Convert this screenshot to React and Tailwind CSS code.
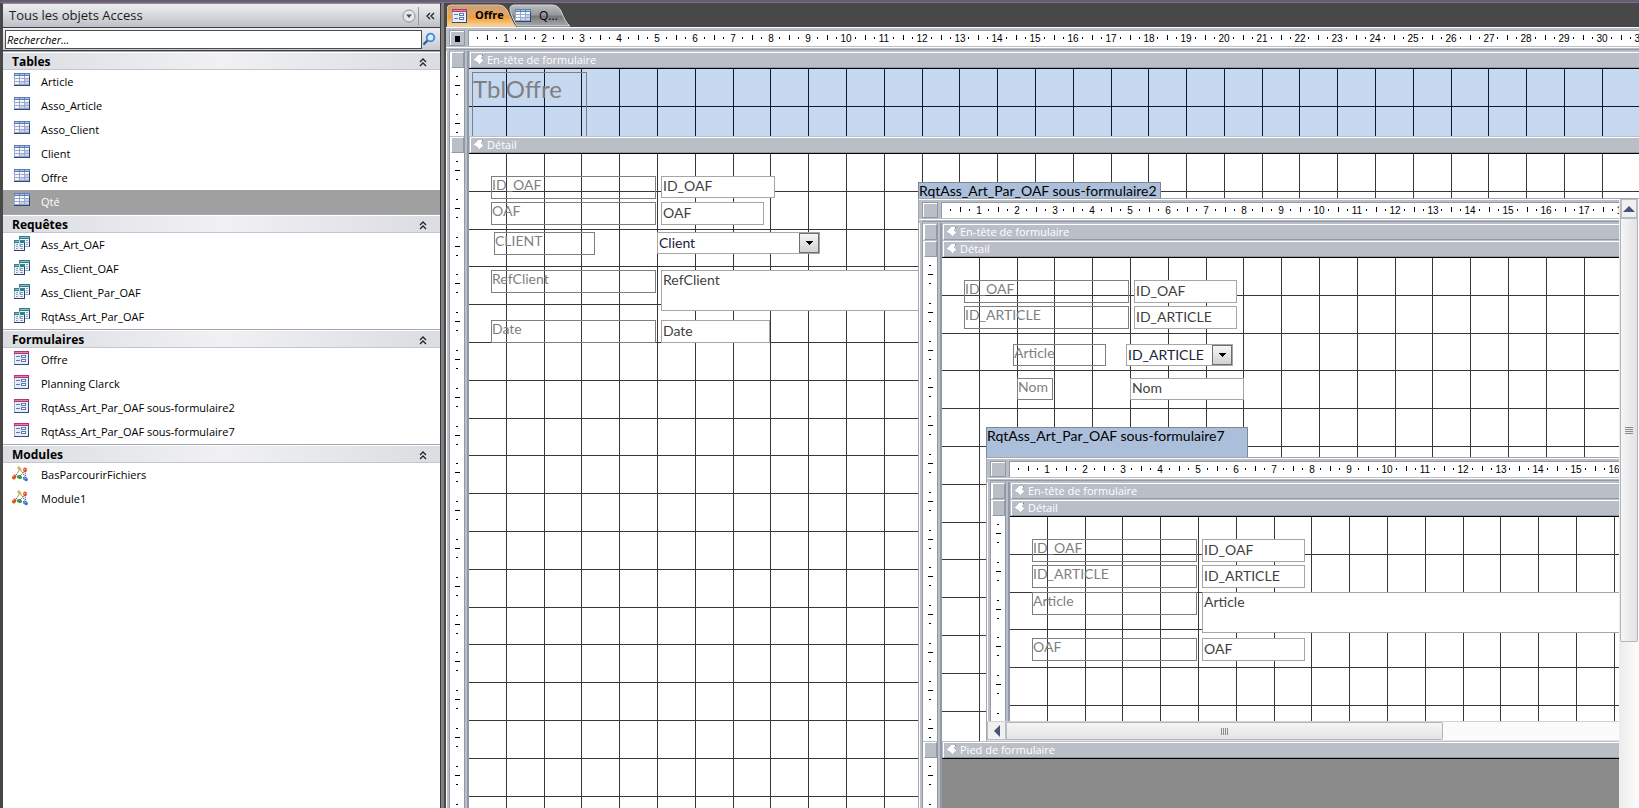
import React, { useState } from "react";

const CM = 96 / 2.54;
const range = (n) => Array.from({ length: n }, (_, i) => i);

const groups = [
  {
    title: "Tables",
    type: "table",
    items: ["Article", "Asso_Article", "Asso_Client", "Client", "Offre", "Qté"],
  },
  {
    title: "Requêtes",
    type: "query",
    items: ["Ass_Art_OAF", "Ass_Client_OAF", "Ass_Client_Par_OAF", "RqtAss_Art_Par_OAF"],
  },
  {
    title: "Formulaires",
    type: "form",
    items: [
      "Offre",
      "Planning Clarck",
      "RqtAss_Art_Par_OAF sous-formulaire2",
      "RqtAss_Art_Par_OAF sous-formulaire7",
    ],
  },
  { title: "Modules", type: "module", items: ["BasParcourirFichiers", "Module1"] },
];

/* ---------- Icons ---------- */

const TableIcon = () => (
  <svg width="16" height="13" viewBox="0 0 16 13" shapeRendering="crispEdges">
    <rect width="16" height="13" fill="#9aa9c6" />
    <rect width="16" height="3" fill="#5c7fb8" />
    <rect x="1" y="1" width="4" height="1" fill="#a9c0e6" />
    <rect x="6" y="1" width="4" height="1" fill="#a9c0e6" />
    <rect x="11" y="1" width="4" height="1" fill="#a9c0e6" />
    {[3, 6, 9].map((y, r) =>
      [1, 6, 11].map((x, c) => (
        <rect key={`${x}-${y}`} x={x} y={y} width="4" height="2" fill={r + c > 2 ? "#c3d2ee" : "#f6f9ff"} />
      ))
    )}
    <rect y="12" width="16" height="1" fill="#31466e" />
    <rect x="15" y="3" width="1" height="10" fill="#31466e" />
  </svg>
);

const QueryIcon = () => (
  <svg width="16" height="15" viewBox="0 0 16 15" shapeRendering="crispEdges">
    <rect x="5" width="11" height="11" fill="#8ea6c2" />
    <rect x="5" width="11" height="3" fill="#2f8088" />
    <rect x="6" y="1" width="9" height="1" fill="#7fbcc0" />
    <rect x="6" y="3" width="9" height="7" fill="#eef3fb" />
    <rect x="12" y="4" width="2" height="1" fill="#8ba0c4" />
    <rect x="12" y="6" width="2" height="1" fill="#8ba0c4" />
    <rect x="12" y="8" width="2" height="1" fill="#8ba0c4" />
    <rect x="15" y="3" width="1" height="8" fill="#2c4266" />
    <rect y="4" width="11" height="11" fill="#9db0ca" />
    <rect y="4" width="11" height="3" fill="#2f8088" />
    <rect x="1" y="5" width="4" height="1" fill="#7fbcc0" />
    <rect x="1" y="7" width="9" height="7" fill="#eef3fb" />
    <rect x="5" y="4" width="1" height="7" fill="#bfe0e2" />
    <rect x="2" y="8" width="2" height="1" fill="#8ba0c4" />
    <rect x="2" y="10" width="2" height="1" fill="#8ba0c4" />
    <rect x="2" y="12" width="2" height="1" fill="#8ba0c4" />
    <rect x="6" y="8" width="3" height="3" fill="#7f96bd" />
    <rect x="7" y="9" width="2" height="1" fill="#ffffff" />
    <rect x="6" y="12" width="3" height="1" fill="#8ba0c4" />
    <rect x="10" y="7" width="1" height="8" fill="#2c4266" />
    <rect y="14" width="11" height="1" fill="#2c4266" />
  </svg>
);

const FormIcon = () => (
  <svg width="15" height="14" viewBox="0 0 15 14" shapeRendering="crispEdges">
    <rect width="15" height="14" fill="#a3b1cf" />
    <rect width="15" height="3" fill="#b5356f" />
    <rect x="1" y="1" width="13" height="1" fill="#dd86a8" />
    <rect x="1" y="3" width="13" height="10" fill="#e6edfa" />
    <rect x="2" y="5" width="4" height="1" fill="#5f79ad" />
    <rect x="2" y="9" width="4" height="1" fill="#5f79ad" />
    <rect x="7" y="4" width="5" height="3" fill="#5f79ad" />
    <rect x="8" y="5" width="3" height="1" fill="#ffffff" />
    <rect x="7" y="8" width="5" height="3" fill="#5f79ad" />
    <rect x="8" y="9" width="3" height="1" fill="#ffffff" />
    <rect x="14" y="3" width="1" height="11" fill="#344b7c" />
    <rect y="13" width="15" height="1" fill="#344b7c" />
  </svg>
);

const ModuleIcon = () => (
  <svg width="17" height="16" viewBox="0 0 17 16">
    <path d="M8 3 L3 11 M8 3 L14 12 M13 5 L7 11 M13 5 L14 12 M3 11 L14 12" stroke="#444" strokeWidth="1" strokeDasharray="1 1" fill="none" />
    <ellipse cx="7.5" cy="2.8" rx="1.7" ry="2.7" fill="#cdbd58" transform="rotate(-30 7.5 2.8)" />
    <ellipse cx="13" cy="4" rx="1.9" ry="2.4" fill="#df4a22" />
    <circle cx="12.5" cy="3.5" r="0.8" fill="#f7b79a" />
    <ellipse cx="2.2" cy="11" rx="1.9" ry="2.6" fill="#df4a22" transform="rotate(25 2.2 11)" />
    <circle cx="1.7" cy="10" r="0.8" fill="#f7b79a" />
    <ellipse cx="7.5" cy="11" rx="2.5" ry="1.9" fill="#3b9a3e" transform="rotate(20 7.5 11)" />
    <ellipse cx="13.5" cy="13" rx="2.7" ry="1.8" fill="#3e74d8" transform="rotate(30 13.5 13)" />
    <circle cx="13" cy="12.3" r="0.8" fill="#a9c6fa" />
  </svg>
);

const icons = { table: TableIcon, query: QueryIcon, form: FormIcon, module: ModuleIcon };

const DoubleChevronUp = () => (
  <svg width="8" height="9" viewBox="0 0 8 9" fill="none" stroke="#222" strokeWidth="1.3">
    <path d="M1 4 L4 1 L7 4 M1 8 L4 5 L7 8" />
  </svg>
);

const SectionArrow = () => (
  <svg width="10" height="10" viewBox="0 0 10 10" shapeRendering="crispEdges">
    <path d="M4 0 H9 V1 H8 V2 H7 V4 H8 V5 H9 V6 H8 V7 H7 V8 H6 V9 H5 V8 H4 V7 H3 V6 H1 V5 H0 V4 H1 V3 H2 V2 H3 V1 H4 Z" fill="#fff" />
    <rect x="8" y="0" width="1" height="1" fill="#6f7682" />
  </svg>
);

/* ---------- Navigation pane ---------- */

const NavGroup = ({ title, type, items, selected, onSelect }) => {
  const [open, setOpen] = useState(true);
  const Icon = icons[type];

  return (
    <section>
      <button
        type="button"
        onClick={() => setOpen(!open)}
        className="flex h-[19px] w-full items-center justify-between border-t border-b border-t-[#a3a8b3] border-b-[#c3c7cd] bg-gradient-to-r from-[#dadde1] via-[#f1f1f3] to-[#dadde1] pt-[3px] pr-[13px] pl-[9px] text-[12px] leading-[14px] font-bold text-black shadow-[inset_0_1px_0_#fff]"
      >
        <span>{title}</span>
        <DoubleChevronUp />
      </button>
      {open && (
        <ul>
          {items.map((item) => {
            const active = selected === `${type}/${item}`;
            return (
              <li key={item}>
                <button
                  type="button"
                  onClick={() => onSelect(`${type}/${item}`)}
                  className={`flex h-6 w-full items-start text-left text-[11px] leading-[23px] ${
                    active ? "bg-[#a0a0a0] text-white" : "text-black"
                  }`}
                >
                  <span className={`w-[38px] shrink-0 pt-[3px] ${type === "module" ? "pl-[9px]" : "pl-[11px]"}`}>
                    <Icon />
                  </span>
                  <span>{item}</span>
                </button>
              </li>
            );
          })}
        </ul>
      )}
    </section>
  );
};

const NavigationPane = () => {
  const [selected, setSelected] = useState("table/Qté");
  const [search, setSearch] = useState("");

  return (
    <aside className="flex w-[438px] shrink-0 flex-col border-r border-[#3a3a3a] bg-white">
      <header className="flex h-[25px] items-center border-t border-b border-t-[#8a8a90] border-b-[#3a3d42] bg-gradient-to-b from-[#eeeff1] to-[#bdc1c7] pl-[6px]">
        <h1 className="flex-1 text-[13px] text-[#1c1c1c]">Tous les objets Access</h1>
        <button type="button" aria-label="Options">
          <svg width="14" height="14" viewBox="0 0 14 14">
            <circle cx="7" cy="7" r="6" fill="#e6e8eb" stroke="#8c9097" />
            <path d="M4 5.5 H10 L7 9 Z" fill="#4a4f60" />
          </svg>
        </button>
        <span className="mx-[2px] h-[18px] w-px bg-[#9198a5]" />
        <button type="button" aria-label="Réduire" className="flex w-[19px] justify-center">
          <svg width="9" height="8" viewBox="0 0 9 8" fill="none" stroke="#222" strokeWidth="1.3">
            <path d="M4 1 L1 4 L4 7 M8 1 L5 4 L8 7" />
          </svg>
        </button>
      </header>

      <div className="flex h-[23px] items-center border-b border-[#3a3d42] bg-gradient-to-b from-[#eeeff1] to-[#c6cad0] pr-1 pl-[2px]">
        <input
          type="text"
          aria-label="Rechercher"
          placeholder="Rechercher..."
          value={search}
          onChange={(e) => setSearch(e.target.value)}
          className="h-[19px] min-w-0 flex-1 border border-[#4b4b4b] bg-white px-px text-[11px] italic outline-none placeholder:text-black"
        />
        <button type="button" aria-label="Lancer la recherche">
          <svg width="14" height="14" viewBox="0 0 14 14" fill="none">
            <path d="M1.5 12.5 L5.5 8.5" stroke="#2a4c94" strokeWidth="2" />
            <circle cx="8.5" cy="5.5" r="3.8" fill="#d8ecfa" stroke="#3f86d0" strokeWidth="1.8" />
          </svg>
        </button>
      </div>

      <nav className="flex-1 overflow-hidden">
        {groups.map((group) => (
          <NavGroup key={group.title} {...group} selected={selected} onSelect={setSelected} />
        ))}
      </nav>
    </aside>
  );
};

/* ---------- Form designer ---------- */

const Grid = ({ color }) => (
  <svg className="absolute inset-0 h-full w-full" shapeRendering="crispEdges" fill={color}>
    {range(60).map((i) => (
      <rect key={`v${i}`} x={Math.round(CM * (i + 1)) - 1} y="0" width="1" height="100%" />
    ))}
    {range(30).map((i) => (
      <rect key={`h${i}`} x="0" y={Math.round(CM * (i + 1)) - 1} width="100%" height="1" />
    ))}
  </svg>
);

const HorizontalRuler = ({ length }) => (
  <svg className="h-full w-full" shapeRendering="crispEdges">
    {range(length).map((i) => {
      const x = Math.round(CM * i);
      return (
        <g key={i}>
          <rect x={x + 8} y="6" width="1" height="2" />
          <rect x={x + 18} y="4" width="1" height="5" />
          <rect x={x + 27} y="6" width="1" height="2" />
          <text x={x + 37} y="11" textAnchor="middle" fontFamily="Liberation Sans, sans-serif" fontSize="10">
            {i + 1}
          </text>
        </g>
      );
    })}
  </svg>
);

const VerticalRuler = () => (
  <svg className="absolute inset-0 h-full w-full" shapeRendering="crispEdges">
    {range(30).map((i) => {
      const y = Math.round(CM * i);
      return (
        <g key={i}>
          <rect x="6" y={y + 8} width="2" height="1" />
          <rect x="5" y={y + 17} width="5" height="1" />
          <rect x="6" y={y + 26} width="2" height="1" />
        </g>
      );
    })}
  </svg>
);

const Gutter = ({ children }) => (
  <div className="flex w-[23px] shrink-0 border-r-2 border-l border-r-[#9299a6] border-l-white bg-[#b9bec7] px-[2px]">
    <div className="relative w-4 overflow-hidden border-x border-[#9299a6] bg-white">{children}</div>
  </div>
);

const Section = ({ title, collapsed, className = "", gridColor = "#383838", children }) => (
  <>
    <div className="flex h-[17px] shrink-0">
      <Gutter>
        <div className="h-full border-t border-[#b9bec7] pl-[1px]">
          <div className="h-full border-t border-r border-b border-l border-t-white border-r-[#9299a6] border-b-[#9299a6] border-l-white bg-[#b9bec7]" />
        </div>
      </Gutter>
      <div className="flex min-w-0 flex-1 border-t border-[#b9bec7] bg-[#b9bec7] pl-px">
        <h2 className="flex flex-1 items-center gap-[3px] border-t border-b border-l border-t-white border-b-[#9299a6] border-l-white pl-[3px] text-[11px] leading-[14px] whitespace-nowrap text-white">
          <SectionArrow />
          {title}
        </h2>
      </div>
    </div>
    {!collapsed && (
      <div className={`flex ${className}`}>
        <Gutter>
          <VerticalRuler />
        </Gutter>
        <div className="relative min-w-0 flex-1 overflow-hidden border-t border-black">
          {gridColor && <Grid color={gridColor} />}
          {children}
        </div>
      </div>
    )}
  </>
);

const Designer = ({ selected, rulerLength, children }) => (
  <div className="flex min-h-0 min-w-0 flex-1 flex-col bg-white">
    <div className="flex h-6 shrink-0 flex-col border-t border-white bg-[#b9bec7] pt-[2px]">
      <div className="flex h-[16px]">
        <div className="ml-[3px] w-4 shrink-0 border border-[#9299a6]">
          <div className="flex h-full items-center justify-center border-t border-l border-white">
            {selected && <span className="h-[6px] w-[5px] bg-black" />}
          </div>
        </div>
        <div className="ml-[3px] min-w-0 flex-1 border-t border-l border-[#9299a6] bg-white">
          <HorizontalRuler length={rulerLength} />
        </div>
      </div>
      <div className="mt-px h-px bg-white" />
      <div className="mt-[1px] ml-[3px] h-px bg-[#9299a6]" />
    </div>
    {children}
  </div>
);

const controlBase = "absolute border font-[Lato,'Open_Sans',sans-serif] text-[14px]";

const FieldLabel = ({ className, htmlFor, children }) => (
  <label
    htmlFor={htmlFor}
    className={`${controlBase} overflow-hidden border-[#7f7f7f] leading-[15px] whitespace-nowrap text-[#7f7f7f] ${className}`}
  >
    {children}
  </label>
);

const TextBox = ({ className, id, value }) => (
  <input
    id={id}
    defaultValue={value}
    className={`${controlBase} border-[#a6a6a6] bg-white px-px pb-[3px] leading-[17px] text-[#3f3f3f] outline-none ${className}`}
  />
);

const MemoBox = ({ className, id, value }) => (
  <textarea
    id={id}
    defaultValue={value}
    className={`${controlBase} resize-none border-[#a6a6a6] bg-white px-px leading-[17px] text-[#3f3f3f] outline-none ${className}`}
  />
);

const ComboBox = ({ className, id, value }) => (
  <div className={`absolute h-[22px] ${className}`}>
    <select
      id={id}
      className="block h-full w-full appearance-none border border-[#a6a6a6] bg-white pb-[2px] pl-px font-[Lato,'Open_Sans',sans-serif] text-[14px] leading-[17px] text-[#17243a] outline-none"
    >
      <option>{value}</option>
    </select>
    <span className="pointer-events-none absolute top-[1px] right-[1px] flex h-5 w-5 items-center justify-center border border-[#6e6e6e] bg-gradient-to-b from-[#f6f6f6] to-[#d2d2d2]">
      <svg width="7" height="4" viewBox="0 0 7 4" shapeRendering="crispEdges">
        <path d="M0 0 H7 V1 H6 V2 H5 V3 H4 V4 H3 V3 H2 V2 H1 V1 H0 Z" />
      </svg>
    </span>
  </div>
);

const SubformTitle = ({ className, children }) => (
  <div
    className={`${controlBase} overflow-hidden border-b-0 border-[#7f8792] bg-[#abbfda] leading-[15px] whitespace-nowrap text-black ${className}`}
  >
    {children}
  </div>
);

const VerticalScrollbar = () => (
  <div className="flex w-5 shrink-0 flex-col bg-gradient-to-r from-[#ececec] to-[#fdfdfd] px-px">
    <button
      type="button"
      aria-label="Défiler vers le haut"
      className="flex h-5 w-full items-center justify-center border-2 border-t border-[#b7bcc6] bg-[#f0f0f0]"
    >
      <svg width="12" height="6" viewBox="0 0 12 6">
        <path d="M0 6 L6 0 L12 6 Z" fill="#465478" />
      </svg>
    </button>
    <div className="flex h-[423px] flex-col items-center justify-center gap-px rounded-b-xs border border-t-0 border-[#b0b5c0] bg-gradient-to-r from-[#f6f6f6] to-[#e2e2e4]">
      {range(4).map((i) => (
        <span key={i} className="h-px w-2 bg-[#8a8a8a]" />
      ))}
    </div>
  </div>
);

const HorizontalScrollbar = () => (
  <div className="flex h-5 shrink-0 border-t border-b border-t-[#d0d2d8] border-b-[#e2e4e8] bg-[#fbfbfb]">
    <button
      type="button"
      aria-label="Défiler vers la gauche"
      className="flex w-5 shrink-0 items-center justify-center border-r-2 border-b border-l border-[#b7bcc6] bg-[#f0f0f0]"
    >
      <svg width="6" height="12" viewBox="0 0 6 12">
        <path d="M6 0 L0 6 L6 12 Z" fill="#465478" />
      </svg>
    </button>
    <div className="flex w-[436px] items-center justify-center gap-px rounded-r-xs border border-l-0 border-[#b0b5c0] bg-gradient-to-b from-[#f5f5f5] to-[#e4e4e6]">
      {range(4).map((i) => (
        <span key={i} className="h-[7px] w-px bg-[#8a8a8a]" />
      ))}
    </div>
  </div>
);

const Subform7 = () => (
  <div className="absolute top-[199px] right-0 bottom-0 left-[44px] flex flex-col border-t border-l border-[#a6a6a6] bg-white">
    <Designer rulerLength={16}>
      <Section title="En-tête de formulaire" collapsed />
      <Section title="Détail" className="min-h-0 flex-1">
        <FieldLabel htmlFor="s7-id" className="top-[22px] left-[22px] h-[23px] w-[165px]">ID_OAF</FieldLabel>
        <TextBox id="s7-id" value="ID_OAF" className="top-[22px] left-[192px] h-[23px] w-[103px]" />
        <FieldLabel htmlFor="s7-idart" className="top-[48px] left-[22px] h-[23px] w-[165px]">ID_ARTICLE</FieldLabel>
        <TextBox id="s7-idart" value="ID_ARTICLE" className="top-[48px] left-[192px] h-[23px] w-[103px]" />
        <FieldLabel htmlFor="s7-article" className="top-[75px] left-[22px] h-[23px] w-[165px]">Article</FieldLabel>
        <MemoBox id="s7-article" value="Article" className="top-[75px] left-[192px] h-[41px] w-[500px]" />
        <FieldLabel htmlFor="s7-oaf" className="top-[121px] left-[22px] h-[23px] w-[165px]">OAF</FieldLabel>
        <TextBox id="s7-oaf" value="OAF" className="top-[121px] left-[192px] h-[23px] w-[103px]" />
      </Section>
      <HorizontalScrollbar />
    </Designer>
  </div>
);

const Subform2 = () => (
  <div className="absolute top-[44px] right-0 bottom-0 left-[449px] flex border-t border-l border-[#a6a6a6] bg-white">
    <Designer rulerLength={18}>
      <Section title="En-tête de formulaire" collapsed />
      <Section title="Détail" className="h-[484px] shrink-0">
        <FieldLabel htmlFor="s2-id" className="top-[22px] left-[22px] h-[23px] w-[165px]">ID_OAF</FieldLabel>
        <TextBox id="s2-id" value="ID_OAF" className="top-[22px] left-[192px] h-[23px] w-[103px]" />
        <FieldLabel htmlFor="s2-idart" className="top-[48px] left-[22px] h-[23px] w-[165px]">ID_ARTICLE</FieldLabel>
        <TextBox id="s2-idart" value="ID_ARTICLE" className="top-[48px] left-[192px] h-[23px] w-[103px]" />
        <FieldLabel htmlFor="s2-article" className="top-[86px] left-[71px] h-[22px] w-[93px]">Article</FieldLabel>
        <ComboBox id="s2-article" value="ID_ARTICLE" className="top-[86px] left-[184px] w-[107px]" />
        <FieldLabel htmlFor="s2-nom" className="top-[120px] left-[75px] h-[22px] w-[36px]">Nom</FieldLabel>
        <TextBox id="s2-nom" value="Nom" className="top-[120px] left-[188px] h-[22px] w-[114px]" />
        <SubformTitle className="top-[169px] left-[44px] h-[30px] w-[262px]">
          RqtAss_Art_Par_OAF sous-formulaire7
        </SubformTitle>
        <Subform7 />
      </Section>
      <Section title="Pied de formulaire" className="min-h-0 flex-1 bg-[#8b8b8b]" gridColor={null} />
    </Designer>
    <VerticalScrollbar />
  </div>
);

const MainForm = () => (
  <Designer selected rulerLength={31}>
    <Section title="En-tête de formulaire" className="h-[68px] shrink-0 bg-[#c6d9f1]" gridColor="#0a1a35">
      <div className="absolute top-[3px] left-[3px] h-[70px] w-[115px] border border-[#7f7f7f] font-[Lato,'Open_Sans',sans-serif] text-[24px] leading-[32px] text-[#7f7f7f]">
        TblOffre
      </div>
    </Section>
    <Section title="Détail" className="min-h-0 flex-1">
      <FieldLabel htmlFor="id-oaf" className="top-[22px] left-[22px] h-[23px] w-[165px]">ID_OAF</FieldLabel>
      <TextBox id="id-oaf" value="ID_OAF" className="top-[22px] left-[192px] h-[22px] w-[114px]" />
      <FieldLabel htmlFor="oaf" className="top-[48px] left-[22px] h-[23px] w-[165px]">OAF</FieldLabel>
      <TextBox id="oaf" value="OAF" className="top-[48px] left-[192px] h-[23px] w-[103px]" />
      <FieldLabel htmlFor="client" className="top-[78px] left-[25px] h-[23px] w-[101px]">CLIENT</FieldLabel>
      <ComboBox id="client" value="Client" className="top-[78px] left-[188px] w-[163px]" />
      <FieldLabel htmlFor="ref-client" className="top-[116px] left-[22px] h-[23px] w-[165px]">RefClient</FieldLabel>
      <MemoBox id="ref-client" value="RefClient" className="top-[116px] left-[192px] h-[41px] w-[300px]" />
      <FieldLabel htmlFor="date" className="top-[166px] left-[22px] h-[23px] w-[165px]">Date</FieldLabel>
      <TextBox id="date" value="Date" className="top-[166px] left-[192px] h-[23px] w-[109px]" />
      <SubformTitle className="top-[28px] left-[449px] h-[16px] w-[243px]">
        RqtAss_Art_Par_OAF sous-formulaire2
      </SubformTitle>
      <Subform2 />
    </Section>
  </Designer>
);

/* ---------- Document tabs ---------- */

const Tabs = () => (
  <div className="flex h-6 shrink-0 items-end pl-px">
    <button type="button" className="relative z-10 flex h-[23px] w-[70px] items-center pl-[5px] text-[11px] font-bold text-black">
      <svg className="absolute inset-0" width="70" height="23" viewBox="0 0 70 23">
        <defs>
          <linearGradient id="tab-active" x1="0" y1="0" x2="0" y2="1">
            <stop offset="0" stopColor="#c99f74" />
            <stop offset="0.4" stopColor="#e3a566" />
            <stop offset="0.55" stopColor="#ee9d3c" />
            <stop offset="1" stopColor="#fbd9a0" />
          </linearGradient>
        </defs>
        <path d="M0 23 V5 Q0 1 4 1 H52 Q57 1 60 6 Q65 18 69 23 Z" fill="url(#tab-active)" stroke="#d9c7b0" strokeWidth="1" />
      </svg>
      <span className="relative flex items-center gap-2">
        <FormIcon />
        Offre
      </span>
    </button>
    <button type="button" className="relative -ml-2 flex h-[23px] w-[62px] items-center pl-[6px] text-[12px] text-black">
      <svg className="absolute inset-0" width="62" height="23" viewBox="0 0 62 23">
        <defs>
          <linearGradient id="tab-idle" x1="0" y1="0" x2="0" y2="1">
            <stop offset="0" stopColor="#bcbdc0" />
            <stop offset="0.45" stopColor="#98999c" />
            <stop offset="0.55" stopColor="#77787b" />
            <stop offset="1" stopColor="#a8a9ac" />
          </linearGradient>
        </defs>
        <path d="M8 22 Q1 10 1 4 Q2 1 5 1 H43 Q49 1 52 7 Q56 18 61 22 Z" fill="url(#tab-idle)" stroke="#d8d9dc" strokeWidth="1" />
      </svg>
      <span className="relative flex items-center gap-2">
        <TableIcon />
        Q...
      </span>
    </button>
  </div>
);

const App = () => {
  return (
    <div className="flex h-screen flex-col overflow-hidden bg-[#484848] font-['Open_Sans','Noto_Sans',sans-serif]">
      <div className="h-[3px] shrink-0 border-b border-[#77727c] bg-[#675b76]" />
      <div className="flex min-h-0 flex-1 pl-[3px]">
        <NavigationPane />
        <div className="mr-[2px] w-[3px] shrink-0 bg-[#808080]" />
        <main className="flex min-w-0 flex-1 flex-col">
          <Tabs />
          <MainForm />
        </main>
      </div>
    </div>
  );
};

export default App;
